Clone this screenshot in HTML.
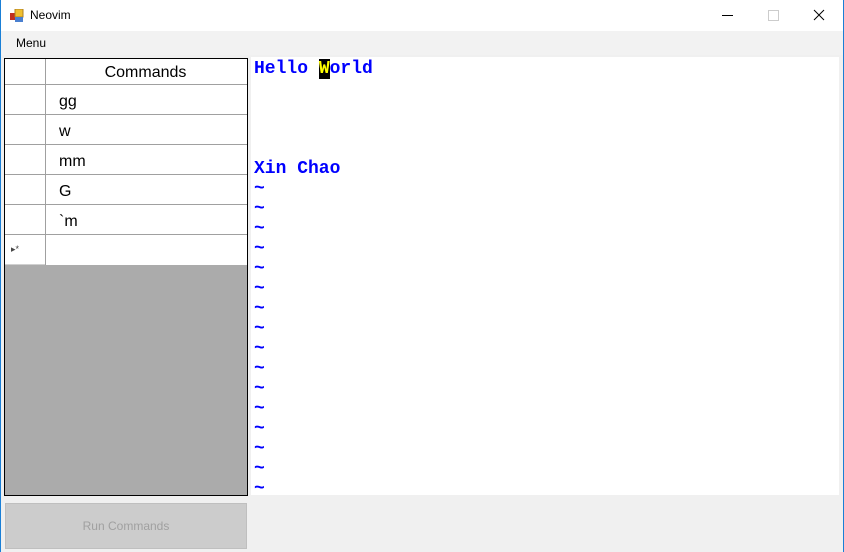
<html><head><style>
body{margin:0;width:844px;height:552px;background:#f0f0f0;position:relative;overflow:hidden;font-family:"Liberation Sans",sans-serif}
.a{position:absolute}
.mono{font-family:"Liberation Mono",monospace;font-weight:bold;font-size:18px;color:#0000ff;line-height:20px;white-space:pre}
</style></head><body>
<div class="a" style="left:0;top:0;width:844px;height:31px;background:#fff"></div>
<div class="a" style="left:0;top:0;width:1px;height:552px;background:#1a7fd6"></div>
<div class="a" style="right:0;top:0;width:1px;height:552px;background:#1a7fd6"></div>
<svg class="a" style="left:10px;top:9px" width="14" height="14"><rect x="0" y="4" width="5" height="7" fill="#c03020"/><rect x="5" y="0" width="8" height="8" fill="#f0c030" stroke="#b08020"/><rect x="5" y="8" width="8" height="5" fill="#4a80d0"/></svg>
<div class="a" style="left:30px;top:8px;font-size:12px">Neovim</div>
<div class="a" style="left:722px;top:15px;width:11px;height:1px;background:#000"></div>
<div class="a" style="left:768px;top:10px;width:9px;height:9px;border:1px solid #ccc"></div>
<svg class="a" style="left:813px;top:9px" width="12" height="12"><path d="M1 1L11 11M11 1L1 11" stroke="#000" stroke-width="1"/></svg>
<div class="a" style="left:1px;top:31px;width:842px;height:24px;background:#f2f2f2"></div>
<div class="a" style="left:16px;top:36px;font-size:12px">Menu</div>
<div class="a" style="left:4px;top:58px;width:242px;height:436px;border:1px solid #000;background:#ababab"></div>
<div class="a" style="left:5px;top:59px;width:242px;height:206px;background:#fff"></div>
<div class="a" style="left:5px;top:59px;width:40px;height:206px;border-right:1px solid #a0a0a0"></div>
<div class="a" style="left:45px;top:60px;width:201px;height:26px;text-align:center;font-size:16px;line-height:26px">Commands</div>
<div class="a" style="left:5px;top:84px;width:242px;height:1px;background:#a0a0a0"></div>
<div class="a" style="left:5px;top:114px;width:242px;height:1px;background:#a0a0a0"></div>
<div class="a" style="left:5px;top:144px;width:242px;height:1px;background:#a0a0a0"></div>
<div class="a" style="left:5px;top:174px;width:242px;height:1px;background:#a0a0a0"></div>
<div class="a" style="left:5px;top:204px;width:242px;height:1px;background:#a0a0a0"></div>
<div class="a" style="left:5px;top:234px;width:242px;height:1px;background:#a0a0a0"></div>
<div class="a" style="left:5px;top:264px;width:40px;height:1px;background:#d0d0d0"></div>
<div class="a" style="left:59px;top:93px;font-size:16px">gg</div>
<div class="a" style="left:59px;top:123px;font-size:16px">w</div>
<div class="a" style="left:59px;top:153px;font-size:16px">mm</div>
<div class="a" style="left:59px;top:183px;font-size:16px">G</div>
<div class="a" style="left:59px;top:213px;font-size:16px">`m</div>
<div class="a" style="left:11px;top:244px;font-size:9px;color:#444">▸*</div>
<div class="a" style="left:5px;top:503px;width:240px;height:44px;background:#cccccc;border:1px solid #bfbfbf;text-align:center;line-height:44px;font-size:12px;color:#a0a0a0">Run Commands</div>
<div class="a" style="left:251px;top:57px;width:588px;height:438px;background:#fff"></div>
<div class="a" style="left:251px;top:57px;width:588px;height:438px;overflow:hidden"><div class="a mono" style="left:3px;top:2px">Hello <span style="background:#000;color:#ff0">W</span>orld




Xin Chao
~
~
~
~
~
~
~
~
~
~
~
~
~
~
~
~</div></div>
</body></html>
